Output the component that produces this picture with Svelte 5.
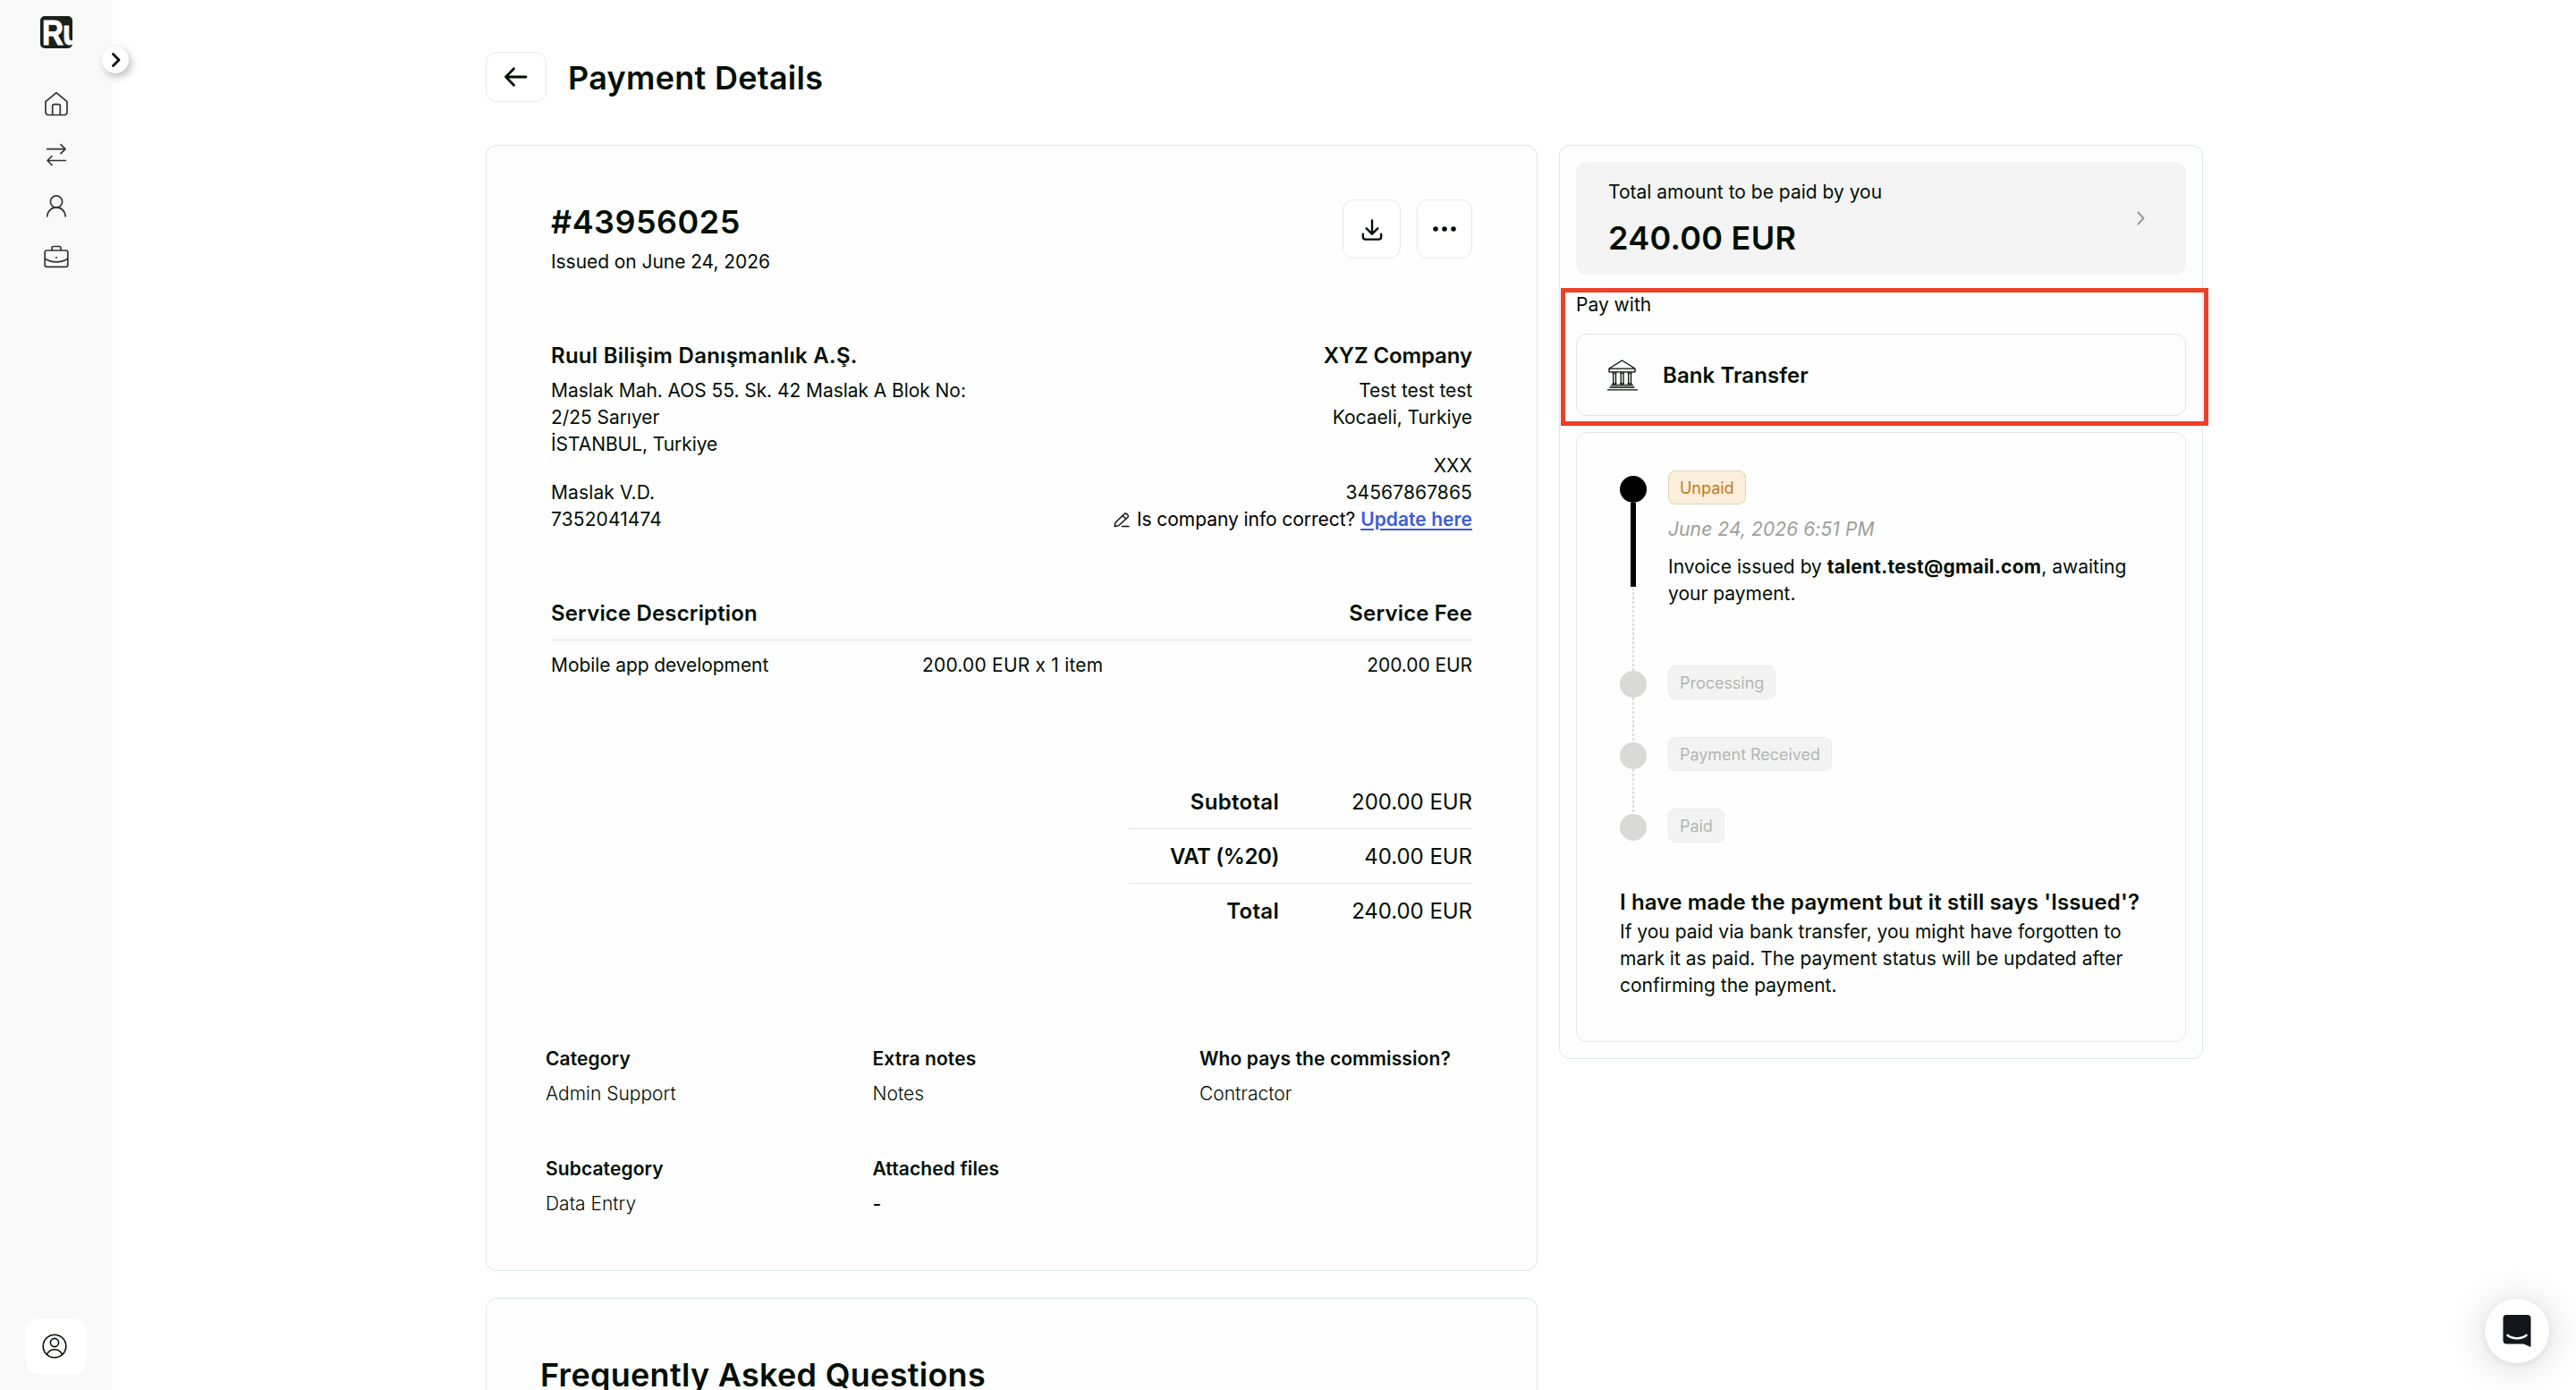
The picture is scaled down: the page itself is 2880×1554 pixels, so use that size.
<script lang="ts">
  const seller = {
    name: 'Ruul Bilişim Danışmanlık A.Ş.',
    address: ['Maslak Mah. AOS 55. Sk. 42 Maslak A Blok No:', '2/25 Sarıyer', 'İSTANBUL, Turkiye'],
    tax: ['Maslak V.D.', '7352041474'],
  };

  const buyer = {
    name: 'XYZ Company',
    address: ['Test test test', 'Kocaeli, Turkiye'],
    tax: ['XXX', '34567867865'],
  };

  const totals = [
    { label: 'Subtotal', value: '200.00 EUR' },
    { label: 'VAT (%20)', value: '40.00 EUR' },
    { label: 'Total', value: '240.00 EUR' },
  ];

  const details = [
    { label: 'Category', value: 'Admin Support' },
    { label: 'Extra notes', value: 'Notes' },
    { label: 'Who pays the commission?', value: 'Contractor' },
    { label: 'Subcategory', value: 'Data Entry' },
    { label: 'Attached files', value: '-' },
  ];

  const nextSteps = ['Processing', 'Payment Received', 'Paid'];
</script>

<div class="page">
  <aside>
    <div class="logo"><span>Ru</span></div>
    <nav>
      <svg viewBox="0 0 28 28"><path d="M2 11.6 14 1.6l12 10V23.5a3 3 0 0 1-3 3H5a3 3 0 0 1-3-3Z" /><path d="M9.7 26.5V16.6a2 2 0 0 1 2-2h4.6a2 2 0 0 1 2 2v9.900" /></svg>
      <svg viewBox="0 -1 28 28"><path d="M3 6.700h21M18.500 1.200l5.500 5.500-5.500 5.500M25 19.500H4M9.500 14 4 19.500l5.500 5.500" /></svg>
      <svg viewBox="0 -1 28 28"><circle cx="14" cy="8.500" r="6.600" /><path d="M3.800 25.500c0-6.300 4.500-10.600 10.200-10.600s10.200 4.300 10.200 10.600" /></svg>
      <svg viewBox="0 0 28 28"><rect x="1.200" y="7" width="25.600" height="18.300" rx="2" /><path d="M9 7V4.500a2 2 0 0 1 2-2h6a2 2 0 0 1 2 2V7M1.200 16c7 5.200 18.600 5.200 25.600 0" /><circle class="dot" cx="14" cy="15" r="1.100" /></svg>
    </nav>
    <button class="profile" aria-label="Profile">
      <svg viewBox="0 0 28 28"><circle cx="14" cy="14" r="12.800" /><circle cx="14" cy="10" r="4.600" /><path d="M5.500 23.200c1.600-3.300 4.700-5.400 8.500-5.400s6.900 2.100 8.500 5.400" /></svg>
    </button>
    <button class="toggle" aria-label="Expand">
      <svg viewBox="0 0 12 18"><path d="m2.500 2.500 6.500 6.500-6.500 6.500" /></svg>
    </button>
  </aside>

  <main>
    <header>
      <button class="back" aria-label="Back">
        <svg viewBox="0 0 28 24"><path d="M25 12H2.500M11.500 2.800 2.500 12l9 9.200" /></svg>
      </button>
      <h1>Payment Details</h1>
    </header>

    <div class="columns">
      <div class="left">
        <section class="card invoice">
          <div class="head">
            <div>
              <h2>#43956025</h2>
              <p>Issued on June 24, 2026</p>
            </div>
            <div class="actions">
              <button class="download" aria-label="Download">
                <svg viewBox="0 0 26 26"><path d="M13 1.500v16M6.200 11.200 13 18l6.800-6.800M2 18v3.500a3 3 0 0 0 3 3h16a3 3 0 0 0 3-3V18" /></svg>
              </button>
              <button class="more" aria-label="More">
                <svg viewBox="0 0 26 6"><circle cx="3" cy="3" r="2.800" /><circle cx="13" cy="3" r="2.800" /><circle cx="23" cy="3" r="2.800" /></svg>
              </button>
            </div>
          </div>

          <div class="parties">
            <div class="seller">
              <h3>{seller.name}</h3>
              {#each seller.address as line}<p>{line}</p>{/each}
              <div class="tax">
                {#each seller.tax as line}<p>{line}</p>{/each}
              </div>
            </div>
            <div class="buyer">
              <h3>{buyer.name}</h3>
              {#each buyer.address as line}<p>{line}</p>{/each}
              <div class="tax">
                {#each buyer.tax as line}<p>{line}</p>{/each}
              </div>
              <p class="update">
                <svg viewBox="0 0 18 17"><path d="M1.200 15.500 2 11.200 11.800 1.800a2.200 2.200 0 0 1 3.300 0l.6.600a2.200 2.200 0 0 1 0 3.200L5.800 14.600ZM10.200 3.600l3.700 3.700M9.500 15.500H17" /></svg>
                <span>Is company info correct?</span>
                <a href="#update">Update here</a>
              </p>
            </div>
          </div>

          <div class="service service-head">
            <h3>Service Description</h3>
            <span></span>
            <h3>Service Fee</h3>
          </div>
          <div class="service service-row">
            <p>Mobile app development</p>
            <p class="quantity">200.00 EUR x 1 item</p>
            <p>200.00 EUR</p>
          </div>

          <div class="totals">
            {#each totals as row}
              <div class="total">
                <strong class:vat={row.label.startsWith('VAT')}>{row.label}</strong>
                <span>{row.value}</span>
              </div>
            {/each}
          </div>

          <dl>
            {#each details as item}
              <div>
                <dt>{item.label}</dt>
                <dd class:dash={item.value === '-'}>{item.value}</dd>
              </div>
            {/each}
          </dl>
        </section>

        <section class="card faq">
          <h2>Frequently Asked Questions</h2>
        </section>
      </div>

      <section class="card payment">
        <div class="amount">
          <div>
            <p>Total amount to be paid by you</p>
            <h2>240.00 EUR</h2>
          </div>
          <svg viewBox="0 0 12 18"><path d="m2.500 2.500 6 6.500-6 6.500" /></svg>
        </div>

        <p class="pay-with">Pay with</p>
        <div class="method">
          <svg viewBox="0 0 36 36">
            <path d="M3.500 10.800 17.500 2l14 8.800M3 11.200h29v3.600H3Z" />
            <path d="M6.500 16.200h5M15 16.200h5M23.500 16.200h5M6.500 28h5M15 28h5M23.500 28h5" />
            <path d="M7.700 16.200V28M10.500 16.200V28M16.200 16.200V28M19 16.200V28M24.700 16.200V28M27.500 16.200V28" />
            <path d="M5 29.700h25M3.500 32h28M1 34.800h34" />
          </svg>
          <h3>Bank Transfer</h3>
        </div>
        <div class="highlight"></div>

        <div class="status">
          <ol>
            <li class="active">
              <span class="chip">Unpaid</span>
              <p class="date">June 24, 2026 6:51 PM</p>
              <p>Invoice issued by <b>talent.test@gmail.com</b>, awaiting your payment.</p>
            </li>
            {#each nextSteps as step}
              <li><span class="chip">{step}</span></li>
            {/each}
          </ol>
          <h3>I have made the payment but it still says 'Issued'?</h3>
          <p>
            If you paid via bank transfer, you might have forgotten to mark it as paid. The payment
            status will be updated after confirming the payment.
          </p>
        </div>
      </section>
    </div>
  </main>

  <button class="chat" aria-label="Open chat">
    <svg viewBox="0 0 32 36"><path class="bubble" d="M4.500 0h23A4 4 0 0 1 31.500 4v32l-8-3.600h-19a4 4 0 0 1-4-4V4a4 4 0 0 1 4-4Z" /><path class="smile" d="M5.500 22.800c5.500 4.600 15.500 4.600 21 0" /></svg>
  </button>
</div>

<style>
  :global(body) {
    background: #fff;
    overflow: hidden;
  }

  .page {
    position: relative;
    display: flex;
    height: 1554px;
    overflow: hidden;
    color: #030f04;
    font: 400 21px/30px Inter, sans-serif;
  }

  h1,
  h2,
  h3,
  p,
  ol,
  dl,
  dd {
    margin: 0;
    padding: 0;
  }

  h1,
  h2 {
    font-size: 36px;
    line-height: 54px;
    font-weight: 600;
    letter-spacing: 0.28px;
  }

  h3 {
    font-size: 24px;
    line-height: 36px;
    font-weight: 600;
    letter-spacing: 0.15px;
  }

  button {
    display: flex;
    align-items: center;
    justify-content: center;
    box-sizing: border-box;
    padding: 0;
    border: 1px solid #e8e8e8;
    border-radius: 12px;
    background: #fff;
  }

  svg {
    display: block;
    fill: none;
    stroke: #030f04;
    stroke-width: 2.4;
    stroke-linecap: round;
    stroke-linejoin: round;
  }

  aside {
    position: relative;
    display: flex;
    flex-direction: column;
    align-items: center;
    box-sizing: border-box;
    width: 126px;
    padding: 18px 0;
    background: #f9f9f9;
  }

  .logo {
    width: 36px;
    height: 36px;
    overflow: hidden;
    border-radius: 5px;
    background: #1a211a;
    color: #fff;
    font: 700 38px/36px 'Liberation Sans', sans-serif;
    letter-spacing: -1px;
  }

  .logo span {
    display: block;
    margin: 1px 0 0 2px;
    transform: scaleX(0.87);
    transform-origin: left;
    -webkit-text-stroke: 1px #fff;
  }

  nav {
    display: flex;
    flex-direction: column;
    gap: 29px;
    margin-top: 48px;
  }

  nav svg {
    width: 28px;
    height: 28px;
    stroke: #333;
    stroke-width: 1.7;
    stroke-linecap: butt;
  }

  nav .dot {
    fill: #333;
    stroke: none;
  }

  .profile {
    width: 66px;
    height: 62px;
    margin-top: auto;
    border: 0;
  }

  .profile svg {
    width: 28px;
    margin-right: 4px;
    stroke-width: 1.6;
  }

  .toggle {
    position: absolute;
    top: 52px;
    left: 114px;
    width: 30px;
    height: 30px;
    border: 0;
    border-radius: 50%;
    box-shadow: 3px 4px 9px rgba(0, 0, 0, 0.25);
  }

  .toggle svg {
    width: 12px;
    height: 18px;
    margin-left: 2px;
    stroke: #000;
    stroke-width: 2.8;
  }

  main {
    width: 1920px;
    margin-left: 417px;
    padding-top: 58px;
  }

  header {
    display: flex;
    align-items: center;
    gap: 24px;
    height: 56px;
  }

  h1 {
    padding-top: 2px;
  }

  .back {
    width: 68px;
    height: 56px;
  }

  .back svg {
    width: 28px;
    height: 24px;
    margin-right: 1px;
    stroke-width: 2.8;
  }

  .columns {
    display: flex;
    align-items: flex-start;
    gap: 24px;
    margin-top: 48px;
  }

  .left {
    display: flex;
    flex-direction: column;
    gap: 30px;
  }

  .card {
    box-sizing: border-box;
    border: 1px solid #dce8e5;
    border-radius: 12px;
    background: #fefefe;
  }

  .invoice {
    width: 1176px;
    height: 1259px;
    padding: 58px 72px 0;
  }

  .head {
    display: flex;
    justify-content: space-between;
  }

  .head h2 {
    letter-spacing: 0.47px;
  }

  .head p {
    margin-top: 3px;
    letter-spacing: -0.06px;
  }

  .actions {
    display: flex;
    gap: 18px;
    padding-top: 2px;
  }

  .download {
    width: 65px;
    height: 66px;
  }

  .download svg {
    width: 24px;
    height: 26px;
    margin-top: 1px;
    stroke-width: 2.6;
  }

  .more {
    width: 62px;
    height: 66px;
  }

  .more svg {
    width: 26px;
    fill: #030f04;
    stroke: none;
  }

  .parties {
    display: flex;
    justify-content: space-between;
    margin-top: 72px;
    letter-spacing: -0.06px;
  }

  .parties h3 {
    margin-bottom: 6px;
  }

  .seller h3 {
    letter-spacing: 0.26px;
  }

  .tax {
    margin-top: 24px;
    letter-spacing: 0.12px;
  }

  .buyer {
    text-align: right;
  }

  .buyer h3 {
    letter-spacing: -0.1px;
  }

  .update {
    display: flex;
    align-items: center;
    justify-content: flex-end;
    gap: 6px;
    color: #000;
  }

  .update svg {
    width: 18px;
    height: 17px;
    margin-right: 2px;
    stroke-width: 1.4;
  }

  .update a {
    color: #3b5bdb;
    font-weight: 600;
    letter-spacing: 0.06px;
    text-underline-offset: 3px;
    text-decoration-thickness: 2px;
  }

  .service {
    display: grid;
    grid-template-columns: 415px 1fr 200px;
  }

  .service > :last-child {
    text-align: right;
  }

  .service-head {
    margin-top: 72px;
    padding-bottom: 11px;
    border-bottom: 1px solid #dce4e3;
  }

  .service-row {
    padding-top: 13px;
    letter-spacing: -0.08px;
  }

  .quantity {
    letter-spacing: 0.2px;
  }

  .totals {
    width: 384px;
    margin: 107px 0 0 auto;
    font-size: 24px;
    line-height: 36px;
    letter-spacing: -0.05px;
  }

  .total {
    display: flex;
    justify-content: space-between;
    padding: 13px 0 11px;
  }

  .total + .total {
    border-top: 1px solid #e4e4e4;
  }

  .total strong {
    width: 168px;
    font-weight: 600;
    letter-spacing: 0.3px;
    text-align: right;
  }

  .total .vat {
    letter-spacing: -0.4px;
  }

  dl {
    display: grid;
    grid-template-columns: repeat(3, 365.5px);
    row-gap: 54px;
    margin: 121px -72px 0 -6px;
  }

  dt {
    font-weight: 600;
    letter-spacing: 0.1px;
  }

  dd {
    margin-top: 9px;
    font-weight: 300;
  }

  .dash {
    font-weight: 500;
  }

  .faq {
    width: 1176px;
    height: 400px;
    padding: 58px 60px;
  }

  .payment {
    position: relative;
    width: 720px;
    height: 1022px;
    padding: 18px;
  }

  .amount {
    display: flex;
    align-items: center;
    justify-content: space-between;
    box-sizing: border-box;
    height: 126px;
    padding: 0 44px 0 36px;
    border-radius: 12px;
    background: #f4f4f4;
  }

  .amount > div {
    align-self: flex-start;
    margin-top: 19px;
  }

  .amount h2 {
    margin-top: 9px;
  }

  .amount svg {
    width: 12px;
    height: 18px;
    stroke: #9b9f9b;
    stroke-width: 2.2;
  }

  .pay-with {
    margin: 19px 0 17px;
  }

  .method,
  .status {
    box-sizing: border-box;
    border: 1px solid #dce8e5;
    border-radius: 12px;
  }

  .method {
    display: flex;
    align-items: center;
    gap: 27px;
    height: 92px;
    padding-left: 33px;
  }

  .method h3 {
    padding-top: 2px;
    letter-spacing: 0.08px;
  }

  .method svg {
    width: 36px;
    height: 36px;
    stroke-width: 1.3;
    stroke-linecap: butt;
    stroke-linejoin: miter;
  }

  .highlight {
    position: absolute;
    top: 159px;
    left: 1px;
    box-sizing: border-box;
    width: 724px;
    height: 154px;
    border: 5px solid #ec4028;
  }

  .status {
    height: 682px;
    margin-top: 18px;
    padding: 42px 48px 0;
    border-color: #e6e8e8;
  }

  li {
    position: relative;
    height: 80px;
    padding-left: 54px;
    list-style: none;
  }

  li::before {
    content: '';
    position: absolute;
    top: 6px;
    left: 0;
    width: 30px;
    height: 30px;
    border-radius: 50%;
    background: #d9d9d8;
  }

  li:not(:last-child)::after {
    content: '';
    position: absolute;
    top: 36px;
    bottom: -6px;
    left: 14px;
    width: 2px;
    background: repeating-linear-gradient(#d9d9d8 0 3px, transparent 3px 5px);
  }

  li.active {
    height: 218px;
  }

  li.active::before {
    background: #000;
  }

  li.active::after {
    left: 12px;
    width: 6px;
    background:
      linear-gradient(#000, #000) 0 0 / 6px 94px no-repeat,
      repeating-linear-gradient(#d9d9d8 0 3px, transparent 3px 5px) 2px 0 / 2px 100% no-repeat;
  }

  .chip {
    display: inline-block;
    box-sizing: border-box;
    height: 38px;
    padding: 0 12px;
    border: 1px solid #ebebeb;
    border-radius: 8px;
    background: #f3f3f3;
    color: #b4b7b4;
    font-size: 18px;
    line-height: 38px;
    letter-spacing: -0.03px;
    vertical-align: top;
  }

  .active .chip {
    border-color: #dfd3be;
    background: #fbeeda;
    color: #c27b26;
  }

  .date {
    margin: 13px 0 12px;
    color: #9b9f9b;
    font-style: italic;
    letter-spacing: 0.1px;
  }

  .active b {
    font-weight: 700;
    letter-spacing: 0.25px;
  }

  ol + h3 {
    margin-top: 7px;
  }

  .status h3 {
    white-space: nowrap;
  }

  .chat {
    position: absolute;
    top: 1452px;
    left: 2778px;
    width: 72px;
    height: 72px;
    border: 0;
    border-radius: 50%;
    box-shadow: 0 2px 9px rgba(0, 0, 0, 0.08), 0 3px 48px rgba(0, 0, 0, 0.16);
  }

  .chat svg {
    width: 32px;
    height: 36px;
  }

  .bubble {
    fill: #15161b;
    stroke: none;
  }

  .smile {
    stroke: #fff;
    stroke-width: 2.6;
  }
</style>
